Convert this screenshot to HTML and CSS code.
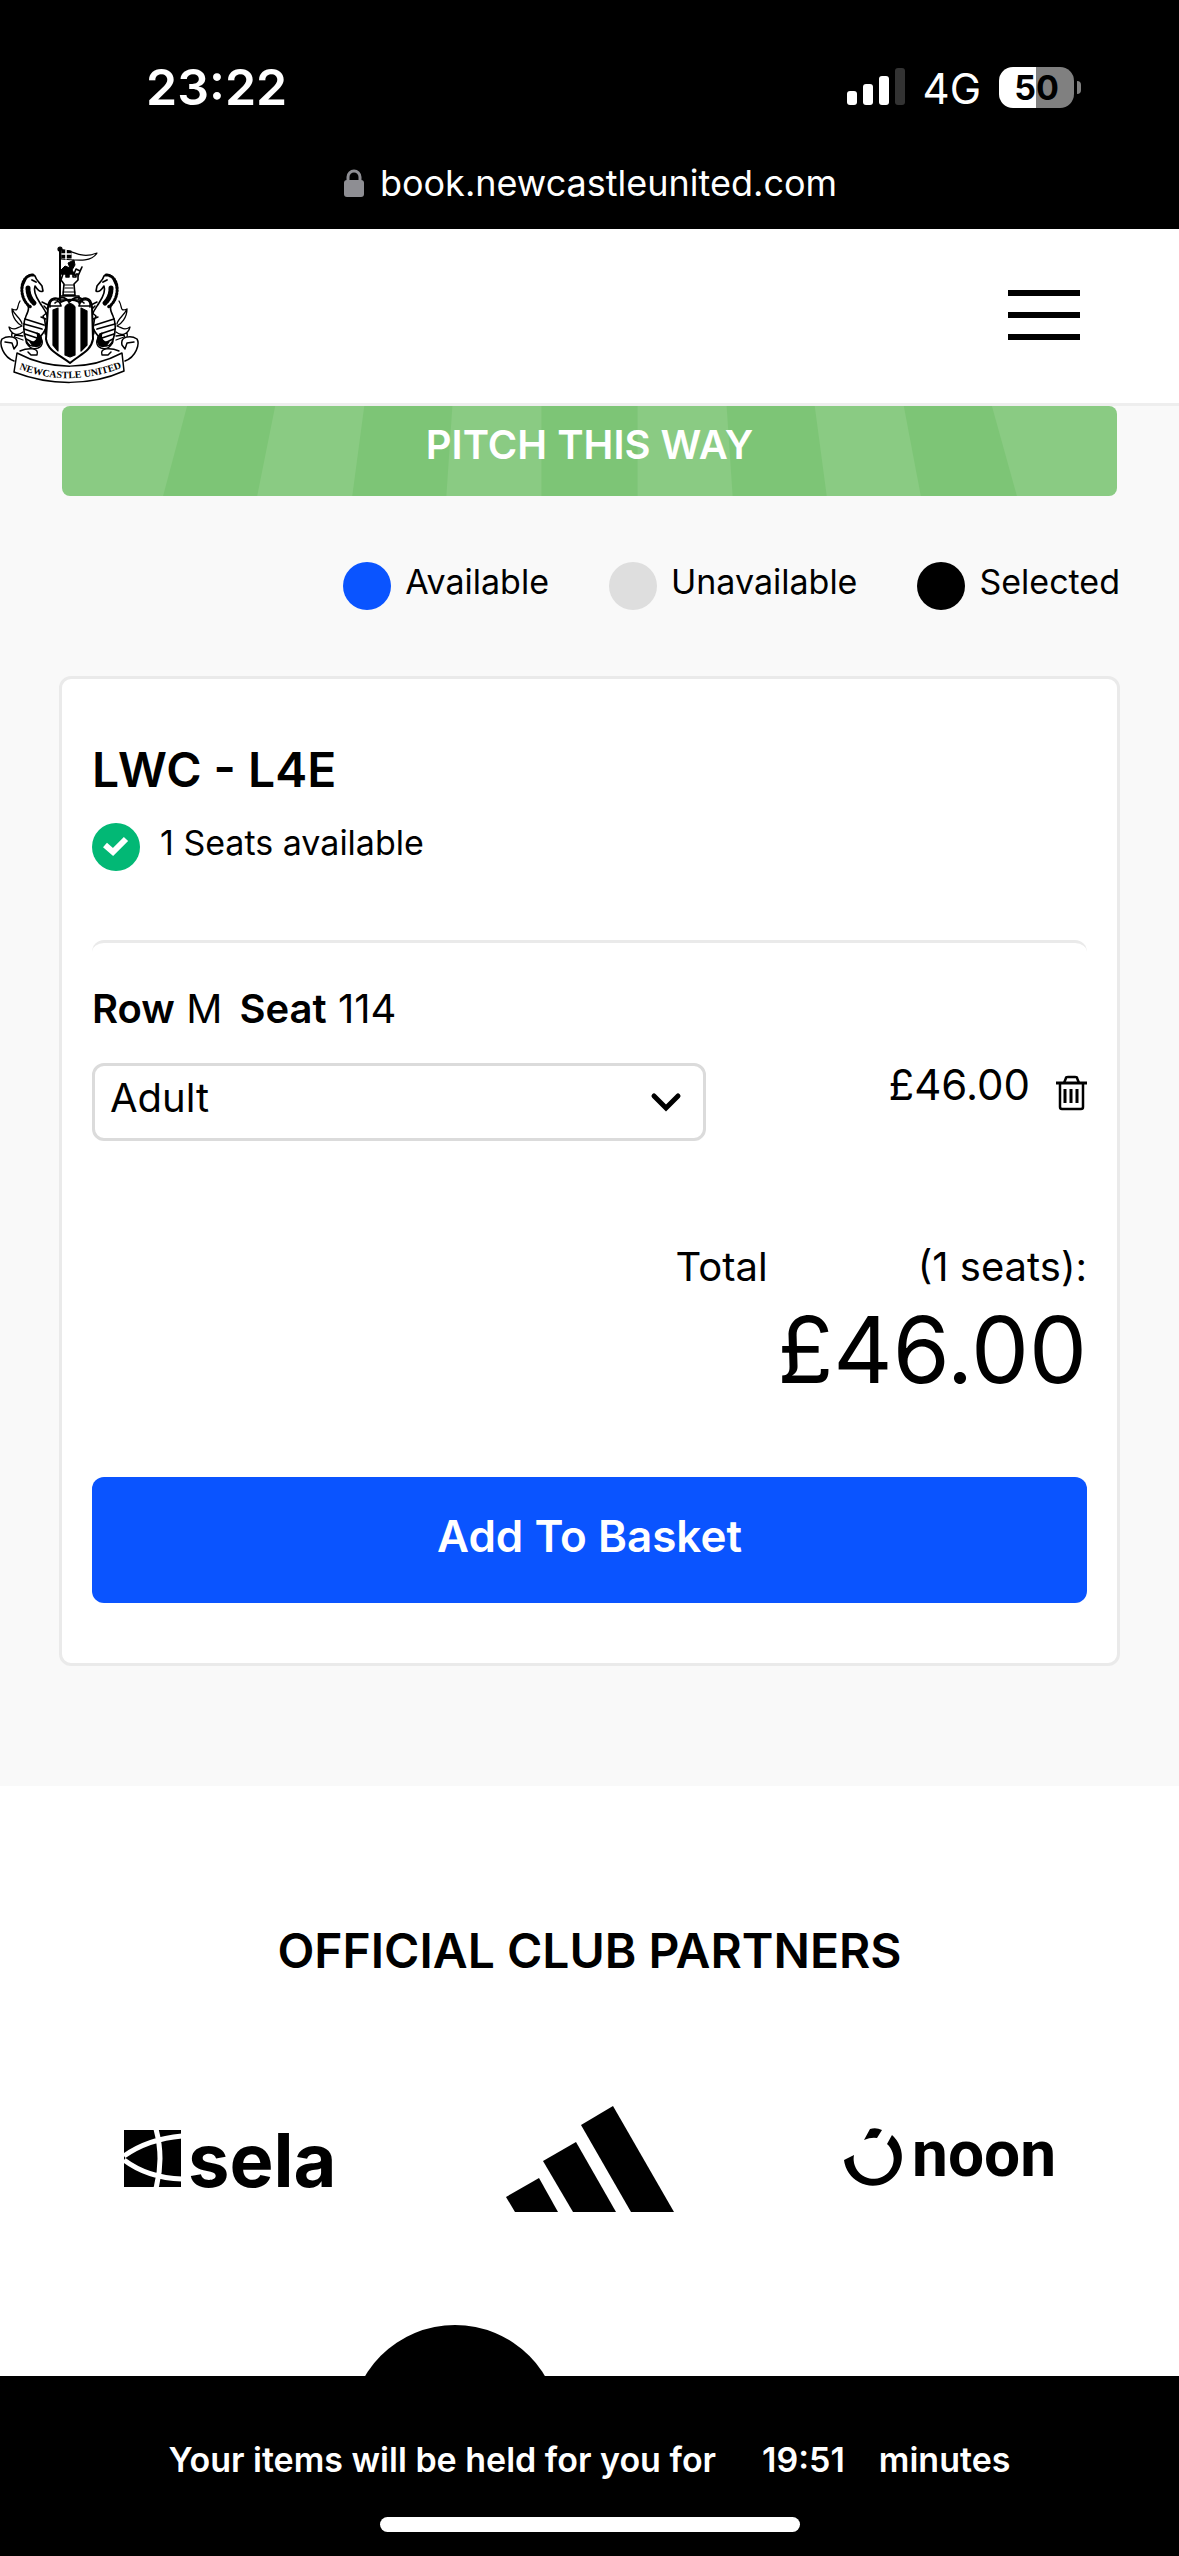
FILE: index.html
```html
<!DOCTYPE html>
<html lang="en">
<head>
<meta charset="utf-8">
<meta name="viewport" content="width=device-width, initial-scale=1">
<title>Newcastle United – Seat selection</title>
<link rel="stylesheet" href="styles.css">
</head>
<body>
<div class="app">
  <div class="device-bar">
    <div class="status">
      <span class="status-time">23:22</span>
      <div class="status-icons">
        <svg class="signal" viewBox="0 0 58 38" aria-hidden="true">
          <rect x="0" y="23" width="10" height="14" rx="3" fill="#fff"/>
          <rect x="16" y="16" width="10" height="21" rx="3" fill="#fff"/>
          <rect x="32" y="8" width="10" height="29" rx="3" fill="#fff"/>
          <rect x="48" y="0" width="10" height="37" rx="3" fill="#333"/>
        </svg>
        <span class="network">4G</span>
        <span class="battery"><span class="battery-level">50</span><span class="battery-cap"></span></span>
      </div>
    </div>
    <div class="address">
      <svg class="lock" viewBox="0 0 20 28" aria-hidden="true">
        <path d="M4 13V8a6 6 0 0 1 12 0v5" fill="none" stroke="#8e8e93" stroke-width="3"/>
        <rect x="0" y="11" width="20" height="17" rx="3" fill="#8e8e93"/>
      </svg>
      <span>book.newcastleunited.com</span>
    </div>
  </div>

  <header class="site-header">
    <a class="crest-link" href="#" aria-label="Newcastle United home">
      <svg class="crest" viewBox="0 0 140 140" fill="none" stroke="#000" stroke-width="1.2" stroke-linecap="round" stroke-linejoin="round">
        <defs>
          <path id="motto" d="M19 124Q68 143 121 123"/>
          <g id="seahorse">
            <path fill="#fff" stroke-width="1.6" d="M35 31C31 28 26 31 25 36C21 42 21 51 25 56C30 62 29 65 26 71C22 80 24 89 26 95C26 100 31 103 35 99C39 92 49 84 48 76C48 68 43 63 40 58C36 52 33 46 35 41C37 44 40 48 43 46L42 41C39 37 36 35 35 31Z"/>
            <path stroke-width="3" stroke-dasharray="1.2 1.8" d="M33 30C24 30 21 40 22 47C23 55 27 60 31 62"/>
            <path stroke-width="5" stroke-dasharray="2 1.2" d="M28 43Q28 52 34 58"/>
            <path stroke-width="1.8" d="M25 74L44 80M24 79L42 84M24 84L39 89M25 89L37 93M26 94L34 98M32 35L36 37"/>
            <path stroke-width="1.3" d="M20 56C16 62 20 67 12 64C15 71 21 73 22 79M12 64C12 73 18 79 22 81M22 81C16 83 15 86 9 82C11 90 18 91 23 87M12 88C11 93 13 96 15 90L23 91M15 92L23 95"/>
            <path fill="#fff" stroke-width="1.4" d="M27 97C31 104 41 101 39 92C44 95 43 101 38 103C32 105 28 102 27 97Z"/>
            <path fill="#000" d="M37 88C42 90 43 96 40 100C37 103 32 101 30 97C35 98 39 94 37 88Z"/>
            <path stroke-width="1.5" d="M44 61L49 66L43 71C47 77 44 82 47 88M46 74L41 72M42 57L48 60"/>
            <path fill="#000" d="M45 84L49 86L48 90L45 89Z"/>
          </g>
        </defs>
        <path stroke-width="2" d="M60 5V53"/>
        <circle cx="60" cy="4" r="2" fill="#000"/>
        <path fill="#fff" d="M61 5C72 4 80 15 97 8C91 18 76 15 61 14Z"/>
        <path fill="#000" d="M62 5L71 6V13H62Z"/>
        <path stroke="#fff" stroke-width="1.6" d="M62 9H71M66 5V14"/>
        <path fill="#000" stroke-width="1" d="M61 25L65 21L70 23L68 18L74 15L75 20L72 25L76 31L71 29L68 32L61 29Z"/>
        <path stroke-width="1.6" d="M74 29L76 24L80 26L82 22L78 31"/>
        <path fill="#fff" stroke-width="1.6" d="M63 29H66V32H69V29H73V32H76V29H78V35L74 39L75 50H63L64 39L61 35ZM60 51H79V55H60Z"/>
        <path stroke-width="1.1" d="M64 40H74M63 47H75M65 43H73"/>
        <use href="#seahorse"/>
        <use href="#seahorse" transform="translate(139 0) scale(-1 1)"/>
        <path fill="#fff" stroke-width="2" d="M48 62C49 51 58 52 61 57C66 54 74 54 79 57C83 52 91 51 92 62L93 94C91 106 81 109 70 118C58 109 48 106 46 94Z"/>
        <path fill="#000" d="M53 65L58 63V106L53 100ZM65 62Q70 55 75 62V110L70 112L65 110ZM81 63L87 66V100L81 106Z"/>
        <path fill="#fff" stroke-width="1.7" d="M50 62C48 53 59 52 61 61H50M90 62C92 53 81 52 79 61H90M55 58Q58 55 60 58M84 58Q81 55 79 58"/>
        <path stroke-width="2" d="M58 54C62 51 67 53 69 57C73 53 78 51 82 54"/>
        <path fill="#fff" stroke-width="1.5" d="M14 116C3 112-1 99 2 94C8 90 19 91 17 100L14 104L12 98L5 97M125 116C136 112 140 99 137 94C131 90 120 91 122 100L125 104L127 98L134 97"/>
        <path fill="#fff" stroke-width="1.5" d="M20 106C27 103 40 102 37 110H31L28 107M119 106C112 103 99 102 102 110H108L111 107"/>
        <path fill="#fff" stroke-width="1.5" d="M17 108C51 126 90 125 122 108L124 126C91 141 50 141 14 127Z"/>
        <text class="crest-motto" stroke="none" fill="#000"><textPath href="#motto">NEWCASTLE UNITED</textPath></text>
      </svg>
    </a>
    <button class="menu-button" type="button" aria-label="Open menu">
      <span></span><span></span><span></span>
    </button>
  </header>

  <div class="scroller">
    <main class="booking">
      <div class="pitch">
        <svg class="pitch-stripes" viewBox="0 0 1054 90" preserveAspectRatio="none" aria-hidden="true">
          <g fill="#7dc576">
            <path d="M125 0H213L195 90H101Z"/>
            <path d="M302 0H390L384 90H290Z"/>
            <path d="M479 0H575V90H479Z"/>
            <path d="M664 0H752L764 90H670Z"/>
            <path d="M841 0H929L954 90H858Z"/>
          </g>
        </svg>
        <span class="pitch-label">PITCH THIS WAY</span>
      </div>

      <ul class="legend">
        <li><span class="dot dot-available"></span><span class="legend-text">Available</span></li>
        <li><span class="dot dot-unavailable"></span><span class="legend-text">Unavailable</span></li>
        <li><span class="dot dot-selected"></span><span class="legend-text">Selected</span></li>
      </ul>

      <section class="card">
        <h1 class="card-title">LWC - L4E</h1>
        <p class="availability">
          <svg class="tick" viewBox="0 0 48 48" aria-hidden="true">
            <circle cx="24" cy="24" r="24" fill="#02b875"/>
            <path d="M13 22L21 29L34 16" fill="none" stroke="#fff" stroke-width="6"/>
          </svg>
          <span class="availability-text">1 Seats available</span>
        </p>
        <div class="seat">
          <p class="seat-name"><b>Row</b> M <b class="seat-word">Seat</b> 114</p>
          <div class="seat-row">
            <div class="select-box">
              <select class="select" aria-label="Ticket type"><option>Adult</option></select>
              <svg class="chevron" viewBox="0 0 30 18" aria-hidden="true"><path d="M3 3L15 15L27 3" fill="none" stroke="#000" stroke-width="5" stroke-linecap="round"/></svg>
            </div>
            <div class="seat-price">
              <span>£46.00</span>
              <button class="remove" type="button" aria-label="Remove seat">
                <svg viewBox="0 0 31 34" fill="none" stroke="#000" stroke-width="2.5">
                  <path d="M0 7H31" stroke-width="3"/>
                  <path d="M8 7L10 2Q10 1 12 1H19Q21 1 21 2L23 7"/>
                  <path d="M4 8V31Q4 33 6 33H25Q27 33 27 31V8"/>
                  <path d="M9 13V27M15 13V27M21 13V27" stroke-width="3"/>
                </svg>
              </button>
            </div>
          </div>
        </div>
        <div class="total">
          <p class="total-line"><span>Total</span><span>(1 seats):</span></p>
          <p class="total-price">£46.00</p>
        </div>
        <button class="basket" type="button">Add To Basket</button>
      </section>
    </main>

    <section class="partners">
      <h2 class="partners-title">OFFICIAL CLUB PARTNERS</h2>
      <div class="partner-grid">
        <a href="#" aria-label="Sela">
          <svg class="logo-sela" viewBox="0 0 210 60">
            <path d="M0 1H57V58H0Z"/>
            <path d="M0 27Q24 10 58 7M0 31Q24 49 58 50M32 0Q40 30 32 59" fill="none" stroke="#fff" stroke-width="5"/>
            <text class="sela-word" x="64" y="58">sela</text>
          </svg>
        </a>
        <a href="#" aria-label="Adidas">
          <svg class="logo-adidas" viewBox="0 0 168 106">
            <path d="M0 91L33 72L52 106H9Z"/>
            <path d="M37 55L70 36L110 106H67Z"/>
            <path d="M75 19L107 0L168 106H125Z"/>
          </svg>
        </a>
        <a href="#" aria-label="Noon">
          <svg class="logo-noon" viewBox="0 0 214 62">
            <path d="M0 32L10 27A20 20 0 1 0 43 16L48 7A29 29 0 1 1 0 32Z"/>
            <path d="M20 12L26 1Q32-1 38 2L33 10Q27 9 20 12Z"/>
            <text class="noon-word" x="68" y="48">noon</text>
          </svg>
        </a>
      </div>
      <div class="partner-grid-small">
        <a class="round-logo" href="#" aria-label="Partner"></a>
      </div>
    </section>
  </div>

  <footer class="hold-bar">
    <p class="hold-text"><span>Your items will be held for you for</span><span class="hold-time">19:51</span><span>minutes</span></p>
    <div class="home-indicator"></div>
  </footer>
</div>
</body>
</html>
```

FILE: styles.css
```css
* {
  box-sizing: border-box;
}

body,
h1,
h2,
p,
ul {
  margin: 0;
  padding: 0;
}

body {
  font-family: Inter, "Liberation Sans", sans-serif;
  font-size: 40px;
  color: #000;
  background: #fff;
}

button,
select {
  font: inherit;
  color: inherit;
  border: 0;
  margin: 0;
  padding: 0;
  background: none;
}

svg {
  display: block;
  overflow: visible;
}

.app {
  display: flex;
  flex-direction: column;
  height: 100vh;
}

/* Device chrome */
.device-bar {
  flex: none;
  padding: 57px 98px 22px 146px;
  background: #000;
  color: #fff;
}

.status {
  display: flex;
  align-items: center;
  justify-content: space-between;
  height: 60px;
}

.status-time {
  font-size: 50px;
  font-weight: 600;
}

.status-icons {
  display: flex;
  align-items: center;
}

.signal {
  width: 58px;
  height: 38px;
}

.network {
  margin: 0 18px;
  padding-top: 3px;
  font-size: 42px;
  line-height: 48px;
}

.battery {
  display: flex;
  align-items: center;
  gap: 3px;
}

.battery-level {
  width: 75px;
  border-radius: 14px;
  background: linear-gradient(90deg, #fff 50%, #808080 50%);
  color: #000;
  font-size: 34px;
  font-weight: 700;
  line-height: 41px;
  text-align: center;
}

.battery-cap {
  width: 4px;
  height: 13px;
  border-radius: 0 4px 4px 0;
  background: #808080;
}

.address {
  display: flex;
  align-items: center;
  justify-content: center;
  gap: 16px;
  margin: 42px 0 0 -46px;
  font-size: 36px;
  line-height: 48px;
}

.lock {
  width: 20px;
  height: 28px;
}

/* Site header */
.site-header {
  flex: none;
  display: flex;
  align-items: center;
  justify-content: space-between;
  height: 177px;
  padding: 0 99px 3px 0;
  border-bottom: 3px solid #eee;
  background: #fff;
}

.crest {
  width: 140px;
  height: 140px;
}

.crest-motto {
  font: bold 10px "Liberation Serif", serif;
}

.menu-button {
  display: flex;
  flex-direction: column;
  gap: 16px;
  width: 72px;
}

.menu-button span {
  height: 6px;
  background: #000;
}

/* Booking */
.scroller {
  flex: 1;
  min-height: 0;
  overflow-y: auto;
  scrollbar-width: none;
}

.booking {
  padding: 0 59px 120px;
  background: #f9f9f9;
}

.pitch {
  display: grid;
  margin: 0 3px;
  border-radius: 8px;
  overflow: hidden;
  background: #8acb83;
}

.pitch-stripes,
.pitch-label {
  grid-area: 1 / 1;
}

.pitch-stripes {
  width: 100%;
  height: 90px;
}

.pitch-label {
  z-index: 1;
  padding-top: 15px;
  color: #fff;
  font-size: 40px;
  font-weight: 600;
  line-height: 48px;
  text-align: center;
}

.legend {
  display: flex;
  justify-content: flex-end;
  gap: 60px;
  margin: 66px 0;
  list-style: none;
}

.legend li {
  display: flex;
  align-items: center;
  gap: 14px;
}

.dot {
  width: 48px;
  height: 48px;
  border-radius: 50%;
}

.dot-available {
  background: #0a54ff;
}

.dot-unavailable {
  background: #dedede;
}

.dot-selected {
  background: #000;
}

.legend-text,
.availability-text {
  padding-bottom: 8px;
  font-size: 34px;
  line-height: 40px;
}

.card {
  padding: 61px 30px 60px;
  border: 3px solid #eaeaea;
  border-radius: 12px;
  background: #fff;
}

.card-title {
  font-size: 48px;
  font-weight: 600;
  line-height: 60px;
}

.availability {
  display: flex;
  align-items: center;
  gap: 20px;
  margin: 23px 0 69px;
}

.tick {
  width: 48px;
  height: 48px;
}

.seat {
  padding-top: 41px;
  border-top: 3px solid #eaeaea;
  border-radius: 12px;
}

.seat-name {
  line-height: 50px;
}

.seat-name b {
  font-weight: 600;
}

.seat-word {
  margin-left: 6px;
}

.seat-row {
  display: flex;
  align-items: flex-start;
  justify-content: space-between;
  margin-top: 29px;
}

.select-box {
  display: grid;
  align-items: center;
  width: calc(100% - 381px);
}

.select {
  grid-area: 1 / 1;
  width: 100%;
  height: 78px;
  padding: 0 60px 10px 15px;
  border: 3px solid #dbdbdb;
  border-radius: 12px;
  appearance: none;
}

.chevron {
  grid-area: 1 / 1;
  justify-self: end;
  width: 30px;
  height: 18px;
  margin-right: 25px;
  pointer-events: none;
}

.seat-price {
  display: flex;
  align-items: flex-start;
  gap: 26px;
  font-size: 42px;
  line-height: 44px;
}

.remove {
  width: 31px;
  padding-top: 13px;
}

.total {
  margin-top: 101px;
}

.total-line {
  display: flex;
  justify-content: flex-end;
  gap: 150px;
  line-height: 50px;
}

.total-price {
  margin-top: 8px;
  font-size: 92px;
  line-height: 100px;
  text-align: right;
}

.basket {
  width: 100%;
  margin-top: 77px;
  padding: 34px 0 42px;
  border-radius: 12px;
  background: #0a54ff;
  color: #fff;
  font-size: 44px;
  font-weight: 600;
  line-height: 50px;
}

/* Partners */
.partners {
  padding: 135px 48px 0;
  background: #fff;
}

.partners-title {
  font-size: 48px;
  font-weight: 600;
  line-height: 60px;
  text-align: center;
}

.partner-grid {
  display: grid;
  grid-template-columns: repeat(3, 1fr);
  place-items: center;
  margin-top: 125px;
}

.logo-sela {
  width: 210px;
  height: 60px;
}

.logo-adidas {
  width: 168px;
  height: 106px;
}

.logo-noon {
  width: 214px;
  height: 62px;
}

.sela-word {
  font: 700 74px Inter, sans-serif;
}

.noon-word {
  font: 700 64px Roboto, sans-serif;
}

.partner-grid-small {
  display: grid;
  grid-template-columns: 270px 270px;
  place-content: center;
  justify-items: center;
  margin-top: 113px;
}

.round-logo {
  width: 210px;
  height: 210px;
  border-radius: 50%;
  background: #000;
}

/* Basket timer */
.hold-bar {
  flex: none;
  display: flex;
  flex-direction: column;
  align-items: center;
  gap: 33px;
  padding: 60px 0 24px;
  background: #000;
  color: #fff;
}

.hold-text {
  display: flex;
  font-size: 34px;
  font-weight: 600;
  line-height: 48px;
}

.hold-time {
  margin: 0 34px 0 46px;
}

.home-indicator {
  width: 420px;
  height: 15px;
  border-radius: 8px;
  background: #fff;
}
```
